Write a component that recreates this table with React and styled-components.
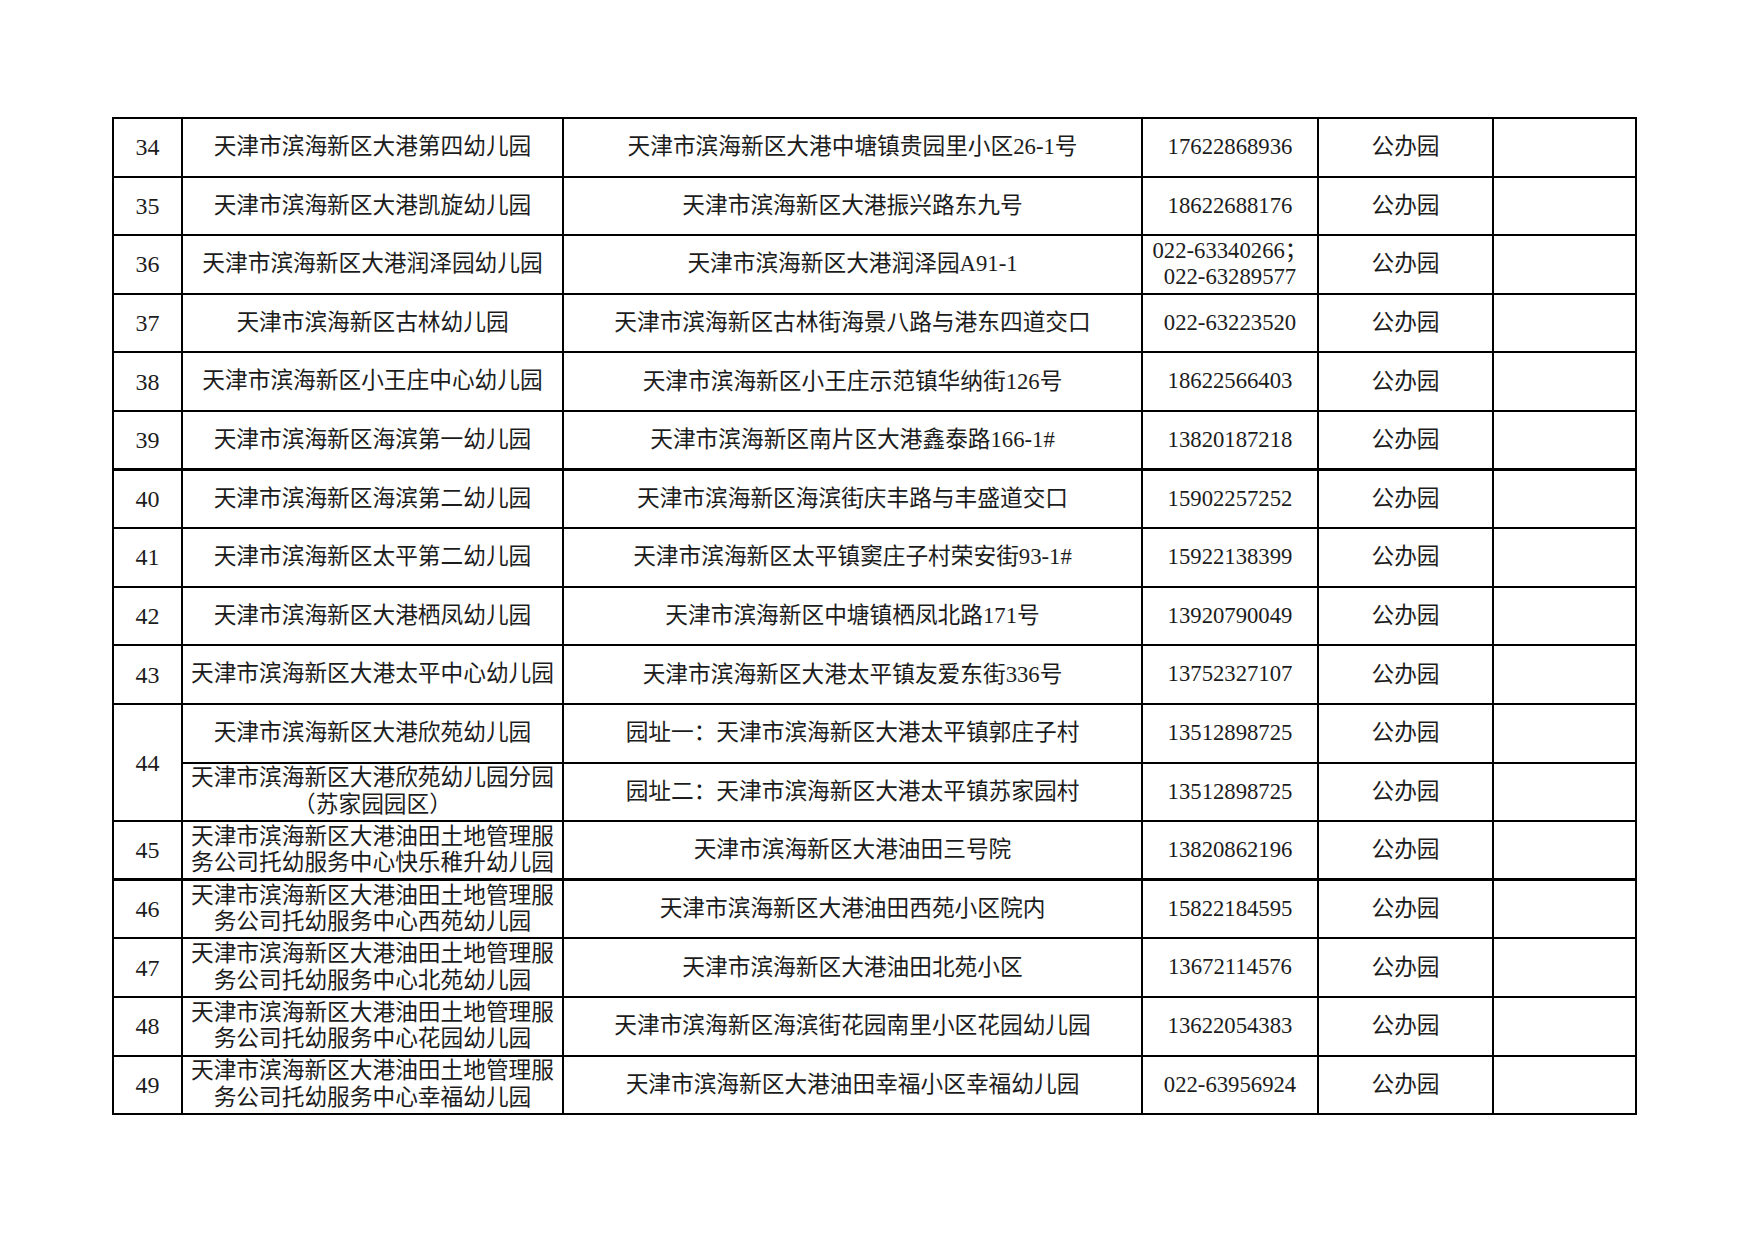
import React from 'react'
import styled, { createGlobalStyle } from 'styled-components'

const GlobalStyle = createGlobalStyle`
  html, body {
    margin: 0;
    padding: 0;
    background: #fff;
  }
  body {
    font-family: "Liberation Serif", "Noto Sans CJK SC", serif;
    color: #1c1c1c;
  }
`

const rows = [
  { no: '34', name: ['天津市滨海新区大港第四幼儿园'], addr: '天津市滨海新区大港中塘镇贵园里小区26-1号', tel: ['17622868936'] },
  { no: '35', name: ['天津市滨海新区大港凯旋幼儿园'], addr: '天津市滨海新区大港振兴路东九号', tel: ['18622688176'] },
  { no: '36', name: ['天津市滨海新区大港润泽园幼儿园'], addr: '天津市滨海新区大港润泽园A91-1', tel: ['022-63340266；', '022-63289577'] },
  { no: '37', name: ['天津市滨海新区古林幼儿园'], addr: '天津市滨海新区古林街海景八路与港东四道交口', tel: ['022-63223520'] },
  { no: '38', name: ['天津市滨海新区小王庄中心幼儿园'], addr: '天津市滨海新区小王庄示范镇华纳街126号', tel: ['18622566403'] },
  { no: '39', name: ['天津市滨海新区海滨第一幼儿园'], addr: '天津市滨海新区南片区大港鑫泰路166-1#', tel: ['13820187218'] },
  { no: '40', name: ['天津市滨海新区海滨第二幼儿园'], addr: '天津市滨海新区海滨街庆丰路与丰盛道交口', tel: ['15902257252'], thick: true },
  { no: '41', name: ['天津市滨海新区太平第二幼儿园'], addr: '天津市滨海新区太平镇窦庄子村荣安街93-1#', tel: ['15922138399'] },
  { no: '42', name: ['天津市滨海新区大港栖凤幼儿园'], addr: '天津市滨海新区中塘镇栖凤北路171号', tel: ['13920790049'] },
  { no: '43', name: ['天津市滨海新区大港太平中心幼儿园'], addr: '天津市滨海新区大港太平镇友爱东街336号', tel: ['13752327107'] },
  { no: '44', span: 2, name: ['天津市滨海新区大港欣苑幼儿园'], addr: '园址一：天津市滨海新区大港太平镇郭庄子村', tel: ['13512898725'] },
  { name: ['天津市滨海新区大港欣苑幼儿园分园', '（苏家园园区）'], addr: '园址二：天津市滨海新区大港太平镇苏家园村', tel: ['13512898725'] },
  { no: '45', name: ['天津市滨海新区大港油田土地管理服', '务公司托幼服务中心快乐稚升幼儿园'], addr: '天津市滨海新区大港油田三号院', tel: ['13820862196'] },
  { no: '46', name: ['天津市滨海新区大港油田土地管理服', '务公司托幼服务中心西苑幼儿园'], addr: '天津市滨海新区大港油田西苑小区院内', tel: ['15822184595'], thick: true },
  { no: '47', name: ['天津市滨海新区大港油田土地管理服', '务公司托幼服务中心北苑幼儿园'], addr: '天津市滨海新区大港油田北苑小区', tel: ['13672114576'] },
  { no: '48', name: ['天津市滨海新区大港油田土地管理服', '务公司托幼服务中心花园幼儿园'], addr: '天津市滨海新区海滨街花园南里小区花园幼儿园', tel: ['13622054383'] },
  { no: '49', name: ['天津市滨海新区大港油田土地管理服', '务公司托幼服务中心幸福幼儿园'], addr: '天津市滨海新区大港油田幸福小区幸福幼儿园', tel: ['022-63956924'] },
]

const colWidths = [69, 381, 579, 176, 175, 143]

function App() {
  return (
    <Page>
      <GlobalStyle />
      <Sheet>
        <colgroup>
          {colWidths.map((w, i) => (
            <col key={i} style={{ width: w }} />
          ))}
        </colgroup>
        <tbody>
          {rows.map((r, i) => (
            <Row key={i} $thick={r.thick}>
              {r.no && <NoCell rowSpan={r.span || 1}>{r.no}</NoCell>}
              <Cell>
                {r.name.map((line, j) => (
                  <Line key={j}>{line}</Line>
                ))}
              </Cell>
              <Cell>{r.addr}</Cell>
              <Cell>
                {r.tel.map((line, j) => (
                  <Line key={j}>{line}</Line>
                ))}
              </Cell>
              <Cell>公办园</Cell>
              <Cell />
            </Row>
          ))}
        </tbody>
      </Sheet>
    </Page>
  )
}

const Page = styled.div`
  padding: 117px 0 0 112px;
  min-height: 1241px;
  box-sizing: border-box;
`

const Sheet = styled.table`
  border-collapse: collapse;
  table-layout: fixed;
  width: 1523px;
`

const Row = styled.tr`
  height: 58.6px;

  td {
    border-top-width: ${p => (p.$thick ? '3px' : '2px')};
  }
`

const Cell = styled.td`
  border: 2px solid #000;
  padding: 0 2px;
  text-align: center;
  vertical-align: middle;
  font-size: 22.7px;
  line-height: 26px;
  white-space: nowrap;
  overflow: hidden;
`

const NoCell = styled(Cell)`
  font-size: 24px;
`

const Line = styled.div`
  line-height: 26.6px;
`

export default App
